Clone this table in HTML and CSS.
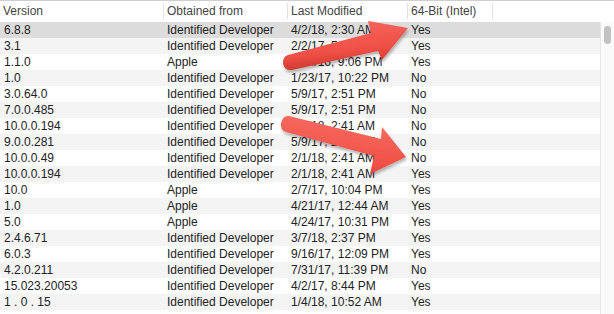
FILE: index.html
```html
<!DOCTYPE html>
<html>
<head>
<meta charset="utf-8">
<link rel="stylesheet" href="styles.css">
</head>
<body>
<div class="window">
  <div class="header">
    <div class="hcell">Version</div>
    <div class="hcell">Obtained from</div>
    <div class="hcell">Last Modified</div>
    <div class="hcell">64-Bit (Intel)</div>
    <div class="hcell last"></div>
  </div>
  <div class="content">
    <div class="rows">
      <div class="row selected"><span>6.8.8</span><span>Identified Developer</span><span>4/2/18, 2:30 AM</span><span>Yes</span><span></span></div>
      <div class="row"><span>3.1</span><span>Identified Developer</span><span>2/2/17, 5:40 PM</span><span>Yes</span><span></span></div>
      <div class="row"><span>1.1.0</span><span>Apple</span><span>2/14/16, 9:06 PM</span><span>Yes</span><span></span></div>
      <div class="row"><span>1.0</span><span>Identified Developer</span><span>1/23/17, 10:22 PM</span><span>No</span><span></span></div>
      <div class="row"><span>3.0.64.0</span><span>Identified Developer</span><span>5/9/17, 2:51 PM</span><span>No</span><span></span></div>
      <div class="row"><span>7.0.0.485</span><span>Identified Developer</span><span>5/9/17, 2:51 PM</span><span>No</span><span></span></div>
      <div class="row"><span>10.0.0.194</span><span>Identified Developer</span><span>2/1/18, 2:41 AM</span><span>No</span><span></span></div>
      <div class="row"><span>9.0.0.281</span><span>Identified Developer</span><span>5/9/17, 2:51 PM</span><span>No</span><span></span></div>
      <div class="row"><span>10.0.0.49</span><span>Identified Developer</span><span>2/1/18, 2:41 AM</span><span>No</span><span></span></div>
      <div class="row"><span>10.0.0.194</span><span>Identified Developer</span><span>2/1/18, 2:41 AM</span><span>Yes</span><span></span></div>
      <div class="row"><span>10.0</span><span>Apple</span><span>2/7/17, 10:04 PM</span><span>Yes</span><span></span></div>
      <div class="row"><span>1.0</span><span>Apple</span><span>4/21/17, 12:44 AM</span><span>Yes</span><span></span></div>
      <div class="row"><span>5.0</span><span>Apple</span><span>4/24/17, 10:31 PM</span><span>Yes</span><span></span></div>
      <div class="row"><span>2.4.6.71</span><span>Identified Developer</span><span>3/7/18, 2:37 PM</span><span>Yes</span><span></span></div>
      <div class="row"><span>6.0.3</span><span>Identified Developer</span><span>9/16/17, 12:09 PM</span><span>Yes</span><span></span></div>
      <div class="row"><span>4.2.0.211</span><span>Identified Developer</span><span>7/31/17, 11:39 PM</span><span>No</span><span></span></div>
      <div class="row"><span>15.023.20053</span><span>Identified Developer</span><span>4/2/17, 8:44 PM</span><span>Yes</span><span></span></div>
      <div class="row"><span>1 . 0 . 15</span><span>Identified Developer</span><span>1/4/18, 10:52 AM</span><span>Yes</span><span></span></div>
    </div>
    <div class="scrollbar"><div class="thumb"></div></div>
  </div>
</div>
<svg class="arrows" width="614" height="314" viewBox="0 0 614 314">
  <defs>
    <filter id="sh" x="-20%" y="-30%" width="140%" height="170%">
      <feDropShadow dx="1" dy="2.5" stdDeviation="1.8" flood-color="#000" flood-opacity="0.3"/>
    </filter>
    <linearGradient id="g1" x1="0" y1="0" x2="0.25" y2="1">
      <stop offset="0" stop-color="#f76a60"/>
      <stop offset="0.7" stop-color="#ef4f45"/>
      <stop offset="1" stop-color="#c9372f"/>
    </linearGradient>
    <linearGradient id="g2" x1="0.25" y1="0" x2="0" y2="1">
      <stop offset="0" stop-color="#f76a60"/>
      <stop offset="0.7" stop-color="#ef4f45"/>
      <stop offset="1" stop-color="#c9372f"/>
    </linearGradient>
  </defs>
  <path filter="url(#sh)" fill="url(#g1)" d="M288 55 L371 33 L368 21 L408 28 L382 60 L378 51 L292 70 Q284 71 283 63 Q283 56 288 55 Z"/>
  <path filter="url(#sh)" fill="url(#g2)" d="M289 116 L381 139 L382 127 L406 157 L370 174 L374 156 L286 132 Q280 130 281 123 Q283 115 289 116 Z"/>
</svg>
</body>
</html>
```
FILE: styles.css
```css
html, body {
  margin: 0;
  padding: 0;
  background: #ffffff;
}
body {
  width: 614px;
  height: 314px;
  overflow: hidden;
  position: relative;
  font-family: "Liberation Sans", Arial, sans-serif;
  font-size: 12px;
  color: #222;
}
.window {
  display: flex;
  flex-direction: column;
  height: 314px;
}
.header {
  display: grid;
  grid-template-columns: 164px 124px 120px 85px 1fr;
  height: 22px;
  border-top: 1px solid #cfcfcf;
  box-sizing: border-box;
  color: #444;
}
.hcell {
  height: 16px;
  margin: 2px 0 3px;
  line-height: 16px;
  padding-left: 3px;
  border-right: 1px solid #e2e2e2;
  white-space: nowrap;
}
.hcell.last {
  border-right: none;
}
.content {
  display: flex;
  flex: 1;
  min-height: 0;
}
.rows {
  flex: 1;
  display: flex;
  flex-direction: column;
}
.row {
  display: grid;
  grid-template-columns: 164px 124px 120px 85px 1fr;
  height: 16px;
  line-height: 16px;
  flex: none;
}
.row:nth-child(even) {
  background: #f4f4f4;
}
.row.selected {
  background: #dcdcdc;
}
.row span {
  padding-left: 4px;
  white-space: nowrap;
  overflow: hidden;
}
.row span:nth-child(2),
.row span:nth-child(3),
.row span:nth-child(4) {
  padding-left: 3px;
}
.scrollbar {
  width: 14px;
  flex: none;
  background: #fafafa;
  border-left: 1px solid #e6e6e6;
  padding: 4px 0 0 3px;
  box-sizing: border-box;
}
.thumb {
  width: 7px;
  height: 18px;
  border-radius: 4px;
  background: #c2c2c2;
}
.arrows {
  position: absolute;
  left: 0;
  top: 0;
  pointer-events: none;
}
```
